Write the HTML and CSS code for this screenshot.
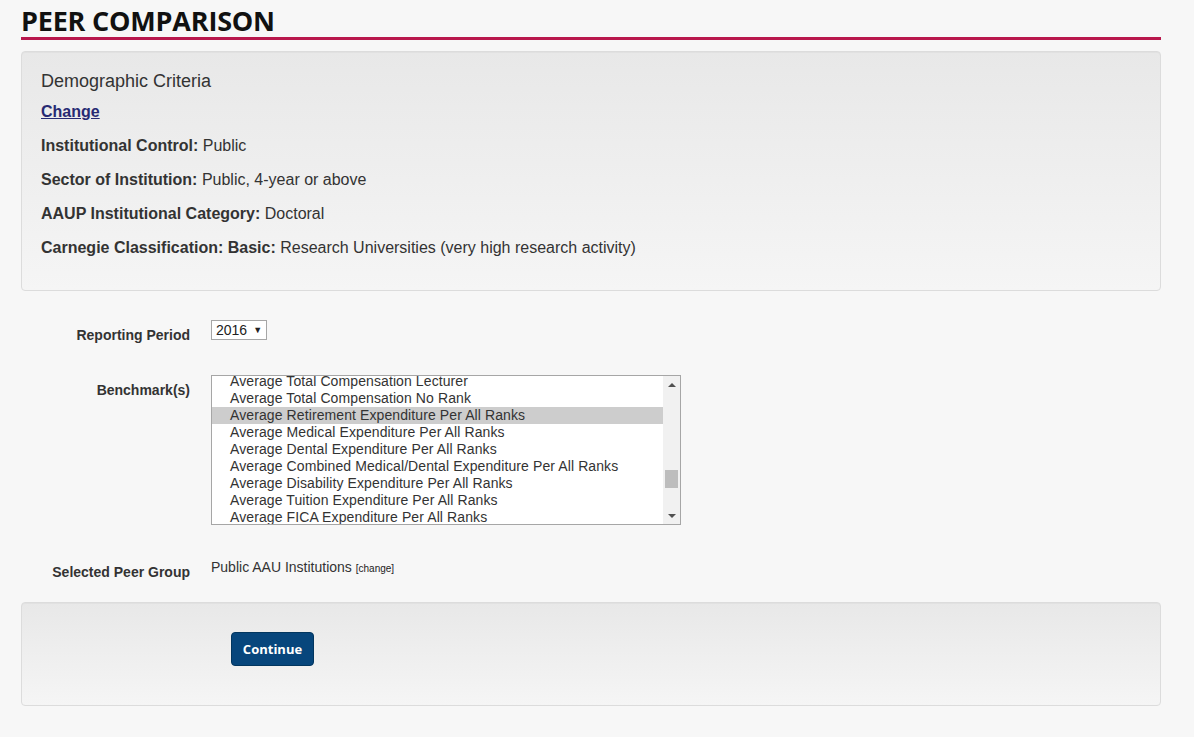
FILE: index.html
```html
<!DOCTYPE html>
<html lang="en">
<head>
<meta charset="utf-8">
<title>Peer Comparison</title>
<link rel="stylesheet" href="styles.css">
</head>
<body>
<div class="container">
  <h1 class="page-title">PEER COMPARISON</h1>

  <div class="well criteria">
    <div class="criteria-title">Demographic Criteria</div>
    <a class="change-link" href="#">Change</a>
    <p class="crit-row"><b>Institutional Control:</b> Public</p>
    <p class="crit-row"><b>Sector of Institution:</b> Public, 4-year or above</p>
    <p class="crit-row"><b>AAUP Institutional Category:</b> Doctoral</p>
    <p class="crit-row"><b>Carnegie Classification: Basic:</b> Research Universities (very high research activity)</p>
  </div>

  <div class="form">
    <div class="form-row row-period">
      <div class="label">Reporting Period</div>
      <div class="field">
        <div class="select-box"><span>2016</span><span class="caret">&#9660;</span></div>
      </div>
    </div>

    <div class="form-row row-bench">
      <div class="label">Benchmark(s)</div>
      <div class="field">
        <div class="listbox">
          <div class="options">
            <div class="opt">Average Total Compensation Lecturer</div>
            <div class="opt">Average Total Compensation No Rank</div>
            <div class="opt selected">Average Retirement Expenditure Per All Ranks</div>
            <div class="opt">Average Medical Expenditure Per All Ranks</div>
            <div class="opt">Average Dental Expenditure Per All Ranks</div>
            <div class="opt">Average Combined Medical/Dental Expenditure Per All Ranks</div>
            <div class="opt">Average Disability Expenditure Per All Ranks</div>
            <div class="opt">Average Tuition Expenditure Per All Ranks</div>
            <div class="opt">Average FICA Expenditure Per All Ranks</div>
          </div>
          <div class="scrollbar">
            <div class="arrow up"></div>
            <div class="track"><div class="thumb"></div></div>
            <div class="arrow down"></div>
          </div>
        </div>
      </div>
    </div>

    <div class="form-row row-peer">
      <div class="label">Selected Peer Group</div>
      <div class="field peer-value">Public AAU Institutions <a class="small-link" href="#">[change]</a></div>
    </div>
  </div>

  <div class="well actions">
    <button class="btn-continue" type="button">Continue</button>
  </div>
</div>
</body>
</html>
```

FILE: styles.css
```css
* { box-sizing: border-box; }

html, body {
  margin: 0;
  padding: 0;
  background: #f7f7f7;
}

body {
  font-family: "Liberation Sans", Arial, sans-serif;
  color: #333;
}

.container {
  width: 1140px;
  margin-left: 21px;
}

.page-title {
  margin: 0;
  padding-top: 4px;
  font-family: "Open Sans", "Noto Sans", sans-serif;
  font-weight: 700;
  font-size: 27px;
  line-height: 33px;
  color: #111;
  letter-spacing: -0.2px;
  border-bottom: 3px solid #b8174c;
}

.well {
  border: 1px solid #dcdcdc;
  border-radius: 4px;
  background: linear-gradient(to bottom, #e8e8e8 0%, #f5f5f5 100%);
  box-shadow: inset 0 1px 1px rgba(0,0,0,0.03);
}

.criteria {
  margin-top: 11px;
  padding: 18px 19px 31px 19px;
}

.criteria-title {
  font-size: 18px;
  line-height: 22px;
  color: #333;
}

.change-link {
  display: block;
  margin-top: 9px;
  font-size: 16px;
  line-height: 22px;
  font-weight: 700;
  color: #272a73;
  text-decoration: underline;
  width: max-content;
}

.crit-row {
  margin: 12px 0 0 0;
  font-size: 16px;
  line-height: 22px;
  color: #333;
}

.crit-row b { color: #333; }

.form {
  padding-top: 29px;
}

.form-row {
  display: grid;
  grid-template-columns: 169px 1fr;
  column-gap: 21px;
}

.label {
  text-align: right;
  font-weight: 700;
  font-size: 14px;
  line-height: 20px;
  padding-top: 5px;
  padding-bottom: 2px;
  color: #333;
}

.select-box {
  width: 56px;
  height: 20px;
  border: 1px solid #a6a6a6;
  background: #fff;
  display: flex;
  align-items: center;
  padding-left: 4px;
  font-size: 14px;
  color: #222;
  gap: 6px;
}

.caret {
  font-size: 9px;
  color: #222;
}

.row-bench { margin-top: 28px; }

.listbox {
  width: 470px;
  height: 150px;
  border: 1px solid #a6a6a6;
  background: #fff;
  display: flex;
  overflow: hidden;
}

.options {
  flex: 1;
  margin-top: -3px;
  overflow: hidden;
}

.opt {
  font-size: 14px;
  line-height: 17px;
  height: 17px;
  padding-left: 18px;
  color: #333;
  letter-spacing: 0.1px;
  white-space: nowrap;
}

.opt.selected { background: #cdcdcd; }

.scrollbar {
  width: 17px;
  background: #f1f1f1;
  display: flex;
  flex-direction: column;
}

.arrow {
  height: 17px;
  display: flex;
  align-items: center;
  justify-content: center;
}

.arrow.up::before {
  content: "";
  border-left: 4px solid transparent;
  border-right: 4px solid transparent;
  border-bottom: 4px solid #505050;
}

.arrow.down::before {
  content: "";
  border-left: 4px solid transparent;
  border-right: 4px solid transparent;
  border-top: 4px solid #505050;
}

.track {
  flex: 1;
  padding: 77px 2px 0 2px;
}

.thumb {
  height: 18px;
  background: #bdbdbd;
}

.row-peer { margin-top: 32px; }

.peer-value {
  font-size: 14px;
  line-height: 20px;
  color: #333;
}

.small-link {
  font-size: 10px;
  color: #222;
  text-decoration: none;
}

.actions {
  margin-top: 18px;
  padding: 29px 19px 39px 19px;
}

.btn-continue {
  margin-left: 190px;
  width: 83px;
  height: 34px;
  border: 1px solid #02365f;
  border-radius: 4px;
  background: #07467c;
  color: #fff;
  font-family: "Open Sans", "Noto Sans", sans-serif;
  font-weight: 700;
  font-size: 13px;
  padding: 0;
  cursor: pointer;
}
```
